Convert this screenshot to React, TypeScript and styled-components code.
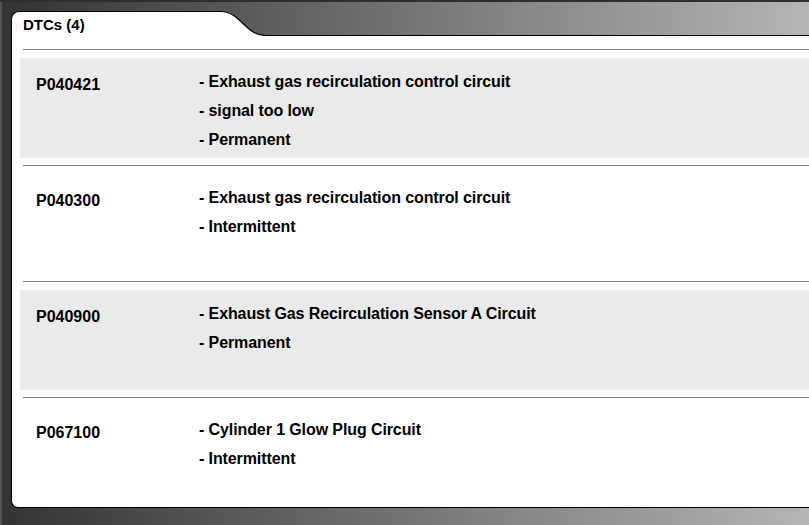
import React from 'react';
import styled, { createGlobalStyle } from 'styled-components';

const dtcs = [
  {
    code: 'P040421',
    lines: ['- Exhaust gas recirculation control circuit', '- signal too low', '- Permanent'],
  },
  {
    code: 'P040300',
    lines: ['- Exhaust gas recirculation control circuit', '- Intermittent'],
  },
  {
    code: 'P040900',
    lines: ['- Exhaust Gas Recirculation Sensor A Circuit', '- Permanent'],
  },
  {
    code: 'P067100',
    lines: ['- Cylinder 1 Glow Plug Circuit', '- Intermittent'],
  },
];

function App() {
  return (
    <>
      <GlobalStyle />
      <Screen>
        <TabRow>
          <Tab>DTCs ({dtcs.length})</Tab>
          <TabCurve width="44" height="25" viewBox="0 0 44 25">
            <path d="M0 0.5 C 19 0.5, 25 24.5, 44 24.5 L44 25 L0 25 Z" fill="#fff" />
            <path d="M0 0.5 C 19 0.5, 25 24.5, 44 24.5" fill="none" stroke="#000" strokeWidth="1.1" />
          </TabCurve>
          <TabFiller />
        </TabRow>
        <Panel>
          {dtcs.map((dtc, i) => (
            <React.Fragment key={dtc.code}>
              <Divider />
              <DtcRow shaded={i % 2 === 0} last={i === dtcs.length - 1}>
                <Code>{dtc.code}</Code>
                <Description>
                  {dtc.lines.map(line => (
                    <Line key={line}>{line}</Line>
                  ))}
                </Description>
              </DtcRow>
            </React.Fragment>
          ))}
        </Panel>
      </Screen>
    </>
  );
}

const GlobalStyle = createGlobalStyle`
  html, body {
    margin: 0;
    padding: 0;
    overflow: hidden;
  }
  body {
    font-family: "Liberation Sans", Arial, sans-serif;
  }
`;

const Screen = styled.div`
  width: 809px;
  height: 525px;
  box-sizing: border-box;
  padding: 11px 0 0 11px;
  overflow: hidden;
  background: linear-gradient(to right, #333333 0%, #3a3a3a 6%, #b5b5b5 100%);
  box-shadow: inset 0 2px 0 #2e2e2e, inset 2px 0 0 #565656;
  display: flex;
  flex-direction: column;
`;

const TabRow = styled.div`
  display: flex;
  height: 25px;
`;

const Tab = styled.div`
  width: 210px;
  box-sizing: border-box;
  padding: 4px 0 0 11px;
  background: #fff;
  border-top: 1px solid #000;
  border-left: 1px solid #000;
  border-top-left-radius: 8px;
  font-size: 15px;
  font-weight: bold;
  color: #000;
  line-height: 18px;
`;

const TabCurve = styled.svg`
  display: block;
  flex: none;
`;

const TabFiller = styled.div`
  flex: 1;
  border-bottom: 1px solid #000;
`;

const Panel = styled.div`
  background: #fff;
  border-left: 1px solid #000;
  border-bottom: 1px solid #000;
  border-bottom-left-radius: 7px;
  padding: 13px 0 1px 0;
`;

const Divider = styled.div`
  margin-left: 11px;
  border-top: 1px solid #808080;
`;

const DtcRow = styled.div<{ shaded?: boolean; last?: boolean }>`
  display: grid;
  grid-template-columns: 163px 1fr;
  height: 100px;
  box-sizing: border-box;
  margin: 8px 0 ${p => (p.last ? '0' : '7px')} 8px;
  padding: 9px 0 0 16px;
  background: ${p => (p.shaded ? '#eaeaea' : 'transparent')};
  font-size: 16px;
  font-weight: bold;
  color: #000;
`;

const Code = styled.div`
  line-height: 29px;
  margin-top: 3px;
`;

const Description = styled.div`
  display: flex;
  flex-direction: column;
  letter-spacing: -0.1px;
`;

const Line = styled.div`
  line-height: 29px;
  white-space: nowrap;
`;

export default App;
